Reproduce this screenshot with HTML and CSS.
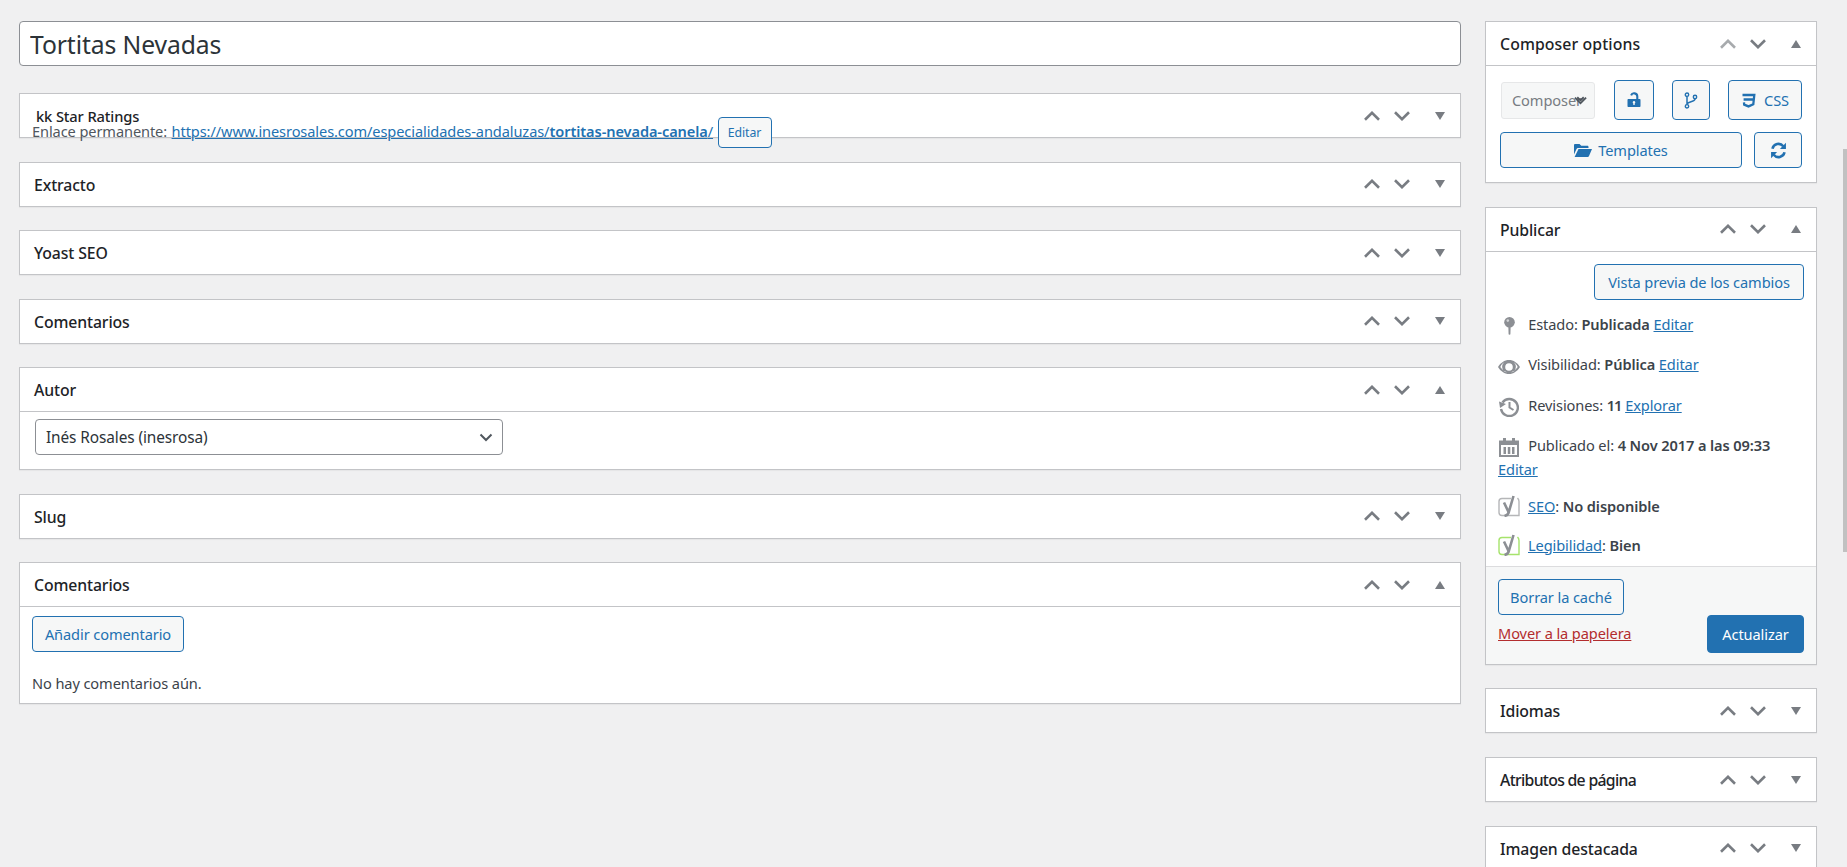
FILE: index.html
```html
<!DOCTYPE html>
<html lang="es">
<head>
<meta charset="utf-8">
<title>Editar página</title>
<link rel="stylesheet" href="styles.css">
</head>
<body>
<svg class="defs" width="0" height="0" aria-hidden="true">
  <symbol id="up" viewBox="0 0 16 10"><path d="M1 8.700 8 1.800l7 6.900" fill="none" stroke="currentColor" stroke-width="2.600"/></symbol>
  <symbol id="down" viewBox="0 0 16 10"><path d="M1 1.300 8 8.200l7-6.900" fill="none" stroke="currentColor" stroke-width="2.600"/></symbol>
  <symbol id="tri-d" viewBox="0 0 10 8"><path d="M0 0h10L5 8z" fill="currentColor"/></symbol>
  <symbol id="tri-u" viewBox="0 0 10 8"><path d="M0 8h10L5 0z" fill="currentColor"/></symbol>
  <symbol id="chev" viewBox="0 0 14 9"><path d="M1.500 1.500 7 7l5.500-5.500" fill="none" stroke="currentColor" stroke-width="2"/></symbol>
  <symbol id="yoast" viewBox="0 0 22 22"><path d="M13 3.500H4C2 3.500 1 4.500 1 6.500v11c0 2 1 3 3 3h17V6.500c0-1.500-.5-2.500-1.500-3.500" fill="none" stroke-width="1.400" class="y-box"/><path d="M6 7.500l4.500 9.500M15.500 1l-5 17c-.5 1.500-1.500 2.500-4 3" fill="none" stroke-width="2.600" class="y-mark"/></symbol>
</svg>

<div class="page">
  <main class="main">
    <input class="title-input" type="text" value="Tortitas Nevadas" aria-label="Título">

    <section class="panel panel-kk">
      <header class="panel-head">
        <h2 class="panel-title title-light">kk Star Ratings</h2>
        <div class="controls"><svg class="ic-chev"><use href="#up"/></svg><svg class="ic-chev"><use href="#down"/></svg><svg class="ic-tri"><use href="#tri-d"/></svg></div>
      </header>
      <div class="permalink">
        <span class="permalink-text">Enlace permanente:</span>
        <a class="permalink-text" href="#">https://www.inesrosales.com/especialidades-andaluzas/<strong>tortitas-nevada-canela</strong>/</a>
        <button class="btn btn-small" type="button">Editar</button>
      </div>
    </section>

    <section class="panel">
      <header class="panel-head">
        <h2 class="panel-title">Extracto</h2>
        <div class="controls"><svg class="ic-chev"><use href="#up"/></svg><svg class="ic-chev"><use href="#down"/></svg><svg class="ic-tri"><use href="#tri-d"/></svg></div>
      </header>
    </section>

    <section class="panel">
      <header class="panel-head">
        <h2 class="panel-title">Yoast SEO</h2>
        <div class="controls"><svg class="ic-chev"><use href="#up"/></svg><svg class="ic-chev"><use href="#down"/></svg><svg class="ic-tri"><use href="#tri-d"/></svg></div>
      </header>
    </section>

    <section class="panel">
      <header class="panel-head">
        <h2 class="panel-title">Comentarios</h2>
        <div class="controls"><svg class="ic-chev"><use href="#up"/></svg><svg class="ic-chev"><use href="#down"/></svg><svg class="ic-tri"><use href="#tri-d"/></svg></div>
      </header>
    </section>

    <section class="panel panel-open panel-autor">
      <header class="panel-head">
        <h2 class="panel-title">Autor</h2>
        <div class="controls"><svg class="ic-chev"><use href="#up"/></svg><svg class="ic-chev"><use href="#down"/></svg><svg class="ic-tri"><use href="#tri-u"/></svg></div>
      </header>
      <div class="autor-body">
        <div class="select-wrap">
          <select class="select-author" aria-label="Autor"><option>Inés Rosales (inesrosa)</option></select>
          <svg class="select-chev"><use href="#chev"/></svg>
        </div>
      </div>
    </section>

    <section class="panel">
      <header class="panel-head">
        <h2 class="panel-title">Slug</h2>
        <div class="controls"><svg class="ic-chev"><use href="#up"/></svg><svg class="ic-chev"><use href="#down"/></svg><svg class="ic-tri"><use href="#tri-d"/></svg></div>
      </header>
    </section>

    <section class="panel panel-open">
      <header class="panel-head">
        <h2 class="panel-title">Comentarios</h2>
        <div class="controls"><svg class="ic-chev"><use href="#up"/></svg><svg class="ic-chev"><use href="#down"/></svg><svg class="ic-tri"><use href="#tri-u"/></svg></div>
      </header>
      <div class="comments-body">
        <button class="btn btn-add" type="button">Añadir comentario</button>
        <p class="no-comments">No hay comentarios aún.</p>
      </div>
    </section>
  </main>

  <aside class="side">
    <section class="panel panel-open">
      <header class="panel-head">
        <h2 class="panel-title title-wide">Composer options</h2>
        <div class="controls"><svg class="ic-chev ic-off"><use href="#up"/></svg><svg class="ic-chev"><use href="#down"/></svg><svg class="ic-tri"><use href="#tri-u"/></svg></div>
      </header>
      <div class="composer-body">
        <div class="composer-row">
          <div class="composer-select-wrap">
            <select class="composer-select" disabled aria-label="Composer"><option>Composer</option></select>
            <svg class="composer-chev" viewBox="0 0 14 9"><path d="M1 1.500 7 7.500 13 1.500" fill="none" stroke="currentColor" stroke-width="2"/><path d="M3.500 1 7 4.500 10.500 1" fill="none" stroke="currentColor" stroke-width="2"/></svg>
          </div>
          <button class="btn btn-lock" type="button" aria-label="Bloquear">
            <svg class="ico" width="16" height="16" viewBox="0 0 16 16"><path d="M11.300 7.500V4.500a3.200 3.200 0 0 0-6.200-1.100" fill="none" stroke="currentColor" stroke-width="2.100"/><path fill-rule="evenodd" d="M2.500 7h11c.6 0 1 .4 1 1v6c0 .6-.4 1-1 1h-11c-.6 0-1-.4-1-1V8c0-.6.4-1 1-1zM8 9a1.300 1.300 0 0 0-.7 2.400V13h1.400v-1.600A1.300 1.300 0 0 0 8 9z" fill="currentColor"/></svg>
          </button>
          <button class="btn btn-branch" type="button" aria-label="Git">
            <svg class="ico" width="14" height="17" viewBox="0 0 14 17"><circle cx="3" cy="2.700" r="1.700" fill="none" stroke="currentColor" stroke-width="1.400"/><circle cx="3" cy="14.300" r="1.700" fill="none" stroke="currentColor" stroke-width="1.400"/><circle cx="11" cy="5" r="1.700" fill="none" stroke="currentColor" stroke-width="1.400"/><path d="M3 4.500v8M11 7c0 3.500-8 2-8 5.500" fill="none" stroke="currentColor" stroke-width="1.500"/></svg>
          </button>
          <button class="btn btn-css" type="button">
            <svg class="ico" width="15" height="15" viewBox="0 0 15 15"><path d="M1.500 2H13.300L12.300 11.300 7.500 13.400 3.200 11.600 3 9.300M2.600 6.500H12.500" fill="none" stroke="currentColor" stroke-width="2.300"/></svg>
            CSS
          </button>
        </div>
        <div class="composer-row composer-row-b">
          <button class="btn btn-templates" type="button">
            <svg class="ico" width="18" height="13" viewBox="0 0 18 13"><path d="M0 1.200C0 .5.500 0 1.200 0h4.300l1.800 1.800h6c.7 0 1.200.5 1.200 1.200v1H4.500C3.500 4 2.800 4.500 2.400 5.300L0 10.500z" fill="currentColor"/><path d="M4.500 5H18l-3 7c-.2.600-.7 1-1.300 1H.6z" fill="currentColor"/></svg>
            Templates
          </button>
          <button class="btn btn-refresh" type="button" aria-label="Actualizar">
            <svg class="ico" width="17" height="17" viewBox="0 0 16 16"><path d="M2.300 6.300A5.800 5.800 0 0 1 12.500 4" fill="none" stroke="currentColor" stroke-width="2.400"/><path d="M15 .8v5.700H9.300z" fill="currentColor"/><path d="M13.700 9.700A5.800 5.800 0 0 1 3.500 12" fill="none" stroke="currentColor" stroke-width="2.400"/><path d="M1 15.200V9.500h5.700z" fill="currentColor"/></svg>
          </button>
        </div>
      </div>
    </section>

    <section class="panel panel-open">
      <header class="panel-head">
        <h2 class="panel-title">Publicar</h2>
        <div class="controls"><svg class="ic-chev"><use href="#up"/></svg><svg class="ic-chev"><use href="#down"/></svg><svg class="ic-tri"><use href="#tri-u"/></svg></div>
      </header>
      <div class="publish-top">
        <button class="btn btn-preview" type="button">Vista previa de los cambios</button>
      </div>
      <div class="misc">
        <div class="misc-row">
          <span class="misc-ico"><svg width="11" height="18" viewBox="0 0 11 18"><circle cx="5.500" cy="5.300" r="5.300" fill="currentColor"/><circle cx="3.800" cy="3.600" r="1.300" fill="#d3d4d6"/><path d="M4.300 8h2.400l-.3 9.200c0 .6-1.800.6-1.800 0z" fill="currentColor"/></svg></span>
          Estado: <b>Publicada</b> <a href="#">Editar</a>
        </div>
        <div class="misc-row">
          <span class="misc-ico"><svg width="22" height="14" viewBox="0 0 22 14"><path fill-rule="evenodd" d="M11 0c4.500 0 8.400 2.700 11 7-2.600 4.300-6.500 7-11 7S2.600 11.300 0 7c2.600-4.300 6.500-7 11-7zM2.300 7c1.800 2.700 4.200 4.600 6.800 5.300A5.600 5.600 0 0 1 6.500 2.200C4.800 3 3.400 4.300 2.300 7zm13.200-4.800a5.600 5.600 0 0 1-2.600 10.100c2.600-.7 5-2.600 6.800-5.300-1.100-2.700-2.500-4-4.200-4.800zM11 3.200a3.800 3.800 0 1 0 0 7.600 3.800 3.800 0 0 0 0-7.600z" fill="currentColor"/></svg></span>
          Visibilidad: <b>Pública</b> <a href="#">Editar</a>
        </div>
        <div class="misc-row">
          <span class="misc-ico"><svg width="20" height="20" viewBox="0 0 20 20"><path d="M3.500 5.500A8.500 8.500 0 1 1 2 12" fill="none" stroke="currentColor" stroke-width="2.400"/><path d="M0 4.500l7 2.500-6 4z" fill="currentColor"/><path d="M10.500 5v5.500l4 2.500" fill="none" stroke="currentColor" stroke-width="2"/></svg></span>
          Revisiones: <b class="b-mid">11</b> <a href="#">Explorar</a>
        </div>
        <div class="misc-row">
          <span class="misc-ico"><svg width="20" height="19" viewBox="0 0 20 19"><path d="M1 3.500h18v14.500H1z" fill="none" stroke="currentColor" stroke-width="2"/><path d="M1 3h18v4H1z" fill="currentColor"/><path d="M4 0h3v4H4zM13 0h3v4h-3zM4.500 9h2.500v7H4.500zM8.800 9h2.500v7H8.800zM13 9h2.500v7H13z" fill="currentColor"/></svg></span>
          Publicado el: <b>4 Nov 2017 a las 09:33</b><br>
          <a href="#">Editar</a>
        </div>
        <div class="misc-row misc-row-y">
          <svg class="y-ico y-grey" width="22" height="22"><use href="#yoast"/></svg>
          <span><a href="#">SEO</a>: <b>No disponible</b></span>
        </div>
        <div class="misc-row misc-row-y misc-row-y2">
          <svg class="y-ico y-green" width="22" height="22"><use href="#yoast"/></svg>
          <span><a href="#">Legibilidad</a>: <b>Bien</b></span>
        </div>
      </div>
      <footer class="publish-foot">
        <div class="foot-left">
          <button class="btn btn-cache" type="button">Borrar la caché</button>
          <a class="trash" href="#">Mover a la papelera</a>
        </div>
        <button class="btn-primary" type="button">Actualizar</button>
      </footer>
    </section>

    <section class="panel">
      <header class="panel-head">
        <h2 class="panel-title">Idiomas</h2>
        <div class="controls"><svg class="ic-chev"><use href="#up"/></svg><svg class="ic-chev"><use href="#down"/></svg><svg class="ic-tri"><use href="#tri-d"/></svg></div>
      </header>
    </section>

    <section class="panel">
      <header class="panel-head">
        <h2 class="panel-title title-tight">Atributos de página</h2>
        <div class="controls"><svg class="ic-chev"><use href="#up"/></svg><svg class="ic-chev"><use href="#down"/></svg><svg class="ic-tri"><use href="#tri-d"/></svg></div>
      </header>
    </section>

    <section class="panel">
      <header class="panel-head">
        <h2 class="panel-title">Imagen destacada</h2>
        <div class="controls"><svg class="ic-chev"><use href="#up"/></svg><svg class="ic-chev"><use href="#down"/></svg><svg class="ic-tri"><use href="#tri-d"/></svg></div>
      </header>
    </section>
  </aside>
</div>
<div class="scroll-thumb"></div>
</body>
</html>
```

FILE: styles.css
```css
* { box-sizing: border-box; }
html, body { height: 100%; }
body {
  margin: 0;
  overflow: hidden;
  background: #f0f0f1;
  color: #3c434a;
  font-family: "Noto Sans", "Open Sans", sans-serif;
  font-size: 14.6px;
  line-height: 24px;
  letter-spacing: -0.1px;
}
.defs { position: absolute; }
a { color: #2271b1; }

.page { display: flex; padding: 21px 0 0 19px; align-items: flex-start; }
.main { width: 1442px; flex: none; }
.side { width: 332px; flex: none; margin-left: 24px; }

.title-input {
  display: block;
  width: 100%;
  height: 45px;
  margin-bottom: 27px;
  padding: 2px 10px 0;
  border: 1px solid #8c8f94;
  border-radius: 4px;
  background: #fff;
  color: #2c3338;
  font-family: inherit;
  font-size: 24.7px;
  letter-spacing: -0.1px;
}

.panel {
  position: relative;
  margin-bottom: 23.6px;
  border: 1px solid #c3c4c7;
  background: #fff;
  box-shadow: 0 1px 1px rgba(0, 0, 0, .04);
}
.panel-autor { margin-bottom: 23.2px; }
.panel-head {
  display: flex;
  align-items: center;
  height: 43px;
  padding-left: 14px;
}
.panel-open > .panel-head { height: 44px; border-bottom: 1px solid #c3c4c7; }
.panel-title {
  margin: 0;
  padding-top: 1px;
  color: #1d2327;
  font-size: 15.8px;
  font-weight: 500;
  letter-spacing: -0.12px;
}
.title-tight { letter-spacing: -0.7px; }
.title-wide { letter-spacing: 0.1px; }
.title-light { position: relative; top: 0; margin-left: 2px; font-size: 14.7px; font-weight: 500; }
.controls {
  display: flex;
  align-items: center;
  margin-left: auto;
  padding-right: 15px;
  color: #787c82;
}
.ic-chev { width: 16px; height: 10px; margin-right: 14px; }
.ic-off { color: #a7aaad; }
.ic-tri { width: 10px; height: 8px; margin-left: 11.5px; }

.permalink {
  position: absolute;
  left: 12px;
  top: 23px;
  display: flex;
  align-items: center;
  gap: 4.5px;
  color: #50575e;
  font-size: 14.6px;
  white-space: nowrap;
}
.permalink-text { position: relative; top: -2px; }
.permalink strong { font-weight: 600; }
.btn {
  display: inline-flex;
  align-items: center;
  justify-content: center;
  padding: 0;
  border: 1px solid #2271b1;
  border-radius: 4px;
  background: #f6f7f7;
  color: #2271b1;
  font-family: inherit;
  font-size: 14.6px;
  letter-spacing: -0.1px;
}
.btn-small { width: 54px; height: 31px; font-size: 12.3px; }

.autor-body { padding: 7px 14px 14px 15px; }
.select-wrap { position: relative; width: 468px; }
.select-author {
  display: block;
  width: 100%;
  height: 36px;
  padding: 0 10px;
  border: 1px solid #8c8f94;
  border-radius: 4px;
  background: #fff;
  color: #2c3338;
  font-family: inherit;
  font-size: 15.4px;
  letter-spacing: -0.1px;
  appearance: none;
}
.select-chev { position: absolute; right: 10px; top: 14px; width: 14px; height: 9px; color: #50575e; }

.comments-body { padding: 9px 12px 8px; }
.btn-add { width: 152px; height: 36px; }
.no-comments { margin: 19px 0 0; }

.composer-body { padding: 14px 14px 14px; }
.composer-row { display: flex; align-items: center; height: 40px; }
.composer-row-b { height: 36px; margin-top: 12px; }
.composer-select-wrap { position: relative; width: 94px; margin-left: 1px; }
.composer-select {
  display: block;
  width: 100%;
  height: 37px;
  padding: 0 0 0 10px;
  border: 1px solid #e6e7e8;
  border-radius: 3px;
  background: #f6f7f7;
  color: #787c82;
  opacity: 1;
  font-family: inherit;
  font-size: 14.6px;
  letter-spacing: -0.1px;
  appearance: none;
}
.composer-chev { position: absolute; right: 8px; top: 14px; width: 13px; height: 9px; color: #50575e; }
.btn-lock { width: 40px; height: 40px; margin-left: 19px; }
.btn-branch { width: 38px; height: 40px; margin-left: 18px; }
.btn-css { width: 74px; height: 40px; margin-left: 18px; gap: 8px; }
.btn-templates { width: 242px; height: 36px; gap: 6px; }
.btn-refresh { width: 48px; height: 36px; margin-left: 12px; }

.publish-top { display: flex; justify-content: flex-end; padding: 12px 12px 4.5px; }
.btn-preview { width: 210px; height: 36px; }
.misc { padding: 0 0 1.5px 12px; }
.misc-row { padding: 8px 0 8.4px; }
.misc-row:nth-child(4) { padding-bottom: 8px; }
.misc-ico {
  display: inline-flex;
  justify-content: center;
  width: 22px;
  margin-right: 4.5px;
  color: #8c8f94;
  vertical-align: middle;
}
.misc b { font-weight: 600; color: #3c434a; }
.misc .b-mid { letter-spacing: -1px; }
.misc-row-y { display: flex; align-items: center; padding: 5px 0 8px; }
.misc-row-y2 { padding-top: 6.5px; padding-bottom: 7.5px; }
.y-ico { flex: none; margin-right: 8px; }
.y-grey { stroke: #b5b6b8; }
.y-box { stroke: inherit; }
.y-mark { stroke: #8c8f94; }
.y-green { stroke: #a6e36c; }
.y-green .y-mark { stroke: #7ad03a; }

.publish-foot {
  display: flex;
  justify-content: space-between;
  align-items: flex-start;
  padding: 12px 12px 11px;
  border-top: 1px solid #dcdcde;
  background: #f6f7f7;
}
.foot-left { display: flex; flex-direction: column; align-items: flex-start; }
.btn-cache { width: 126px; height: 36px; margin-bottom: 6px; }
.trash { color: #b32d2e; }
.btn-primary {
  width: 97px;
  height: 38px;
  margin-top: 36px;
  padding: 0;
  border: 1px solid #2271b1;
  border-radius: 4px;
  background: #2271b1;
  color: #fff;
  font-family: inherit;
  font-size: 14.6px;
  letter-spacing: -0.1px;
}

.scroll-thumb {
  position: absolute;
  right: 0;
  top: 149px;
  width: 4px;
  height: 403px;
  background: #c1c1c1;
}
```
